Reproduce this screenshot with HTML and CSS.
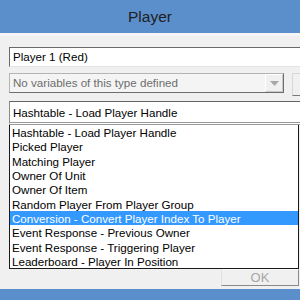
FILE: index.html
```html
<!DOCTYPE html>
<html>
  <head>
    <meta charset="utf-8">
    <title>Player</title>
    <link rel="stylesheet" href="styles.css">
  </head>
  <body>
    <div class="window">
      <div class="titlebar">Player</div>

      <div class="content">
        <div class="field">Player 1 (Red)</div>

        <div class="row">
          <div class="combo disabled">
            <span class="combo-text">No variables of this type defined</span>
            <span class="arrow">
              <svg width="9" height="5" viewBox="0 0 9 5"><path d="M0 0 H9 L4.5 5 Z" fill="#a8a8a8"/></svg>
            </span>
          </div>
          <div class="side-btn"></div>
        </div>

        <div class="combo open">Hashtable - Load Player Handle</div>

        <ul class="list">
          <li>Hashtable - Load Player Handle</li>
          <li>Picked Player</li>
          <li>Matching Player</li>
          <li>Owner Of Unit</li>
          <li>Owner Of Item</li>
          <li>Random Player From Player Group</li>
          <li class="selected">Conversion - Convert Player Index To Player</li>
          <li>Event Response - Previous Owner</li>
          <li>Event Response - Triggering Player</li>
          <li>Leaderboard - Player In Position</li>
        </ul>

        <div class="actions">
          <button class="ok" disabled>OK</button>
        </div>
      </div>

      <div class="bottombar"></div>
    </div>
  </body>
</html>
```

FILE: styles.css
```css
body {
    margin: 0;
    width: 300px;
    height: 300px;
    overflow: hidden;
    background-color: #f0f0f0;
    font-family: "Liberation Sans", Arial, sans-serif;
    font-size: 11.6px;
    color: #000;
}

.window {
    display: flex;
    flex-direction: column;
    height: 300px;
}

.titlebar {
    height: 33px;
    flex: none;
    background-color: #5b8fcb;
    color: #1e1e1e;
    font-size: 15.5px;
    line-height: 34px;
    text-align: center;
}

/* the dialog is wider than the picture: clip it at the right edge */
.content {
    flex: 1;
    width: 291px;
    overflow: hidden;
    border-top: 3px solid #f6f6f6;
    padding: 11px 0 0 9px;
}

.field {
    box-sizing: border-box;
    height: 20px;
    width: 320px;
    background: #fff;
    border: 1px solid;
    border-color: #6a6a6a #e3e3e3 #e3e3e3 #6a6a6a;
    padding-left: 3px;
    line-height: 18px;
}

.row {
    display: flex;
    gap: 8px;
    margin-top: 6px;
}

.combo {
    box-sizing: border-box;
    background: #fff;
    padding-left: 3px;
}

.combo.disabled {
    display: flex;
    flex: none;
    width: 275px;
    height: 20px;
    background: #f4f4f4;
    border: 1px solid;
    border-color: #b4b4b4 #6e6e6e #6e6e6e #b4b4b4;
    color: #6d6d6d;
    line-height: 18px;
}

.combo-text {
    flex: 1;
}

.arrow {
    box-sizing: border-box;
    width: 18px;
    height: 18px;
    display: flex;
    align-items: center;
    justify-content: center;
    background: #f0f0f0;
    border: 1px solid;
    border-color: #fff #c8c8c8 #c8c8c8 #fff;
}

.side-btn {
    box-sizing: border-box;
    flex: none;
    width: 30px;
    height: 23px;
    background: #f0f0f0;
    border: 1px solid;
    border-color: #d8d8d8 #7a7a7a #7a7a7a #d8d8d8;
}

.combo.open {
    width: 320px;
    height: 24px;
    margin-top: 5px;
    border-top: 1px solid #646464;
    border-left: 1px solid #8a8a8a;
    border-bottom: 3px double #9a9a9a;
    line-height: 21px;
}

.list {
    box-sizing: border-box;
    list-style: none;
    margin: 0;
    padding: 0;
    width: 290px;
    background: #fff;
    border: 1px solid #1a1a1a;
    border-top: none;
}

.list li {
    height: 14.33px;
    line-height: 15px;
    padding-left: 2px;
    white-space: nowrap;
}

.list li.selected {
    background-color: #3399ff;
    color: #fff;
}

.actions {
    width: 290px;
    display: flex;
    justify-content: flex-end;
}

.ok {
    box-sizing: border-box;
    width: 78px;
    height: 17px;
    padding: 0;
    background: #f0f0f0;
    border: 1px solid;
    border-color: #f8f8f8 #8a8a8a #8a8a8a #e0e0e0;
    color: #a6a6a6;
    font-family: "Liberation Sans", Arial, sans-serif;
    font-size: 13px;
    line-height: 15px;
}

.bottombar {
    height: 11px;
    flex: none;
    background-color: #5b8fcb;
}
```
